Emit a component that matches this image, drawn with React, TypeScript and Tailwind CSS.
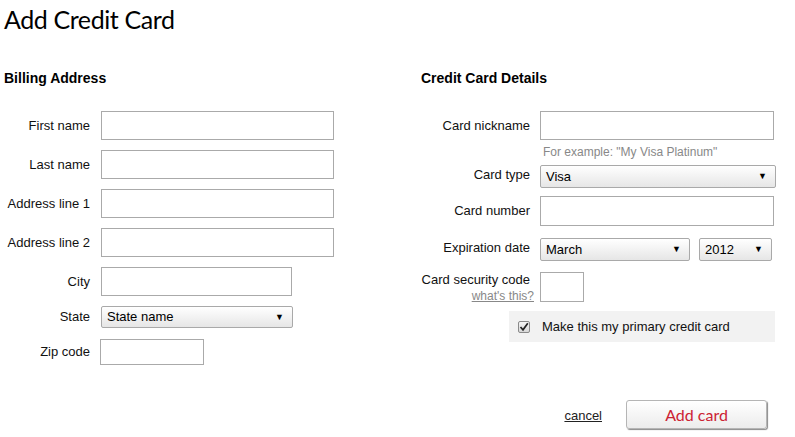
import React from 'react';

const sans = { fontFamily: '"Liberation Sans", Arial, sans-serif' };
const display = { fontFamily: 'Lato, "Open Sans", sans-serif' };

interface FieldProps {
  label: string;
  labelWidth: string;
  children: React.ReactNode;
}

const TextBox = ({ className }: { className: string }) => (
  <div className={`border border-[#aaaaaa] bg-white ${className}`}></div>
);

const SelectBox = ({ value, className }: { value: string; className: string }) => (
  <div
    className={`flex items-center justify-between rounded-[2px] border border-[#a9a9a9] bg-gradient-to-b from-white to-[#e6e6e6] pl-[5px] pr-[8px] text-[13px] text-black ${className}`}
  >
    <span>{value}</span>
    <span className="text-[9px] leading-none">▼</span>
  </div>
);

const LeftRow: React.FC<FieldProps> = ({ label, labelWidth, children }) => (
  <div className="flex items-center">
    <div className={`${labelWidth} shrink-0 text-right text-[13px] text-[#111]`}>{label}</div>
    {children}
  </div>
);

const App: React.FC = () => {
  return (
    <div className="h-[437px] w-[795px] overflow-hidden bg-white px-[4px]" style={sans}>
      <h1 className="pt-[3px] text-[25px] leading-[32px] font-normal tracking-[-0.4px] text-black" style={display}>
        Add Credit Card
      </h1>

      <div className="mt-[35px] flex">
        {/* billing address */}
        <div className="w-[417px] shrink-0">
          <h2 className="text-[14px] leading-[16px] font-bold text-black">Billing Address</h2>
          <div className="mt-[25px] flex flex-col gap-[10px]">
            <LeftRow label="First name" labelWidth="w-[86px]">
              <TextBox className="ml-[11px] h-[29px] w-[233px]" />
            </LeftRow>
            <LeftRow label="Last name" labelWidth="w-[86px]">
              <TextBox className="ml-[11px] h-[29px] w-[233px]" />
            </LeftRow>
            <LeftRow label="Address line 1" labelWidth="w-[86px]">
              <TextBox className="ml-[11px] h-[29px] w-[233px]" />
            </LeftRow>
            <LeftRow label="Address line 2" labelWidth="w-[86px]">
              <TextBox className="ml-[11px] h-[29px] w-[233px]" />
            </LeftRow>
            <LeftRow label="City" labelWidth="w-[86px]">
              <TextBox className="ml-[11px] h-[29px] w-[191px]" />
            </LeftRow>
            <div className="flex items-start">
              <div className="w-[86px] shrink-0 pt-[1px] text-right text-[13px] text-[#111]">State</div>
              <SelectBox value="State name" className="ml-[11px] h-[22px] w-[192px]" />
            </div>
            <div className="mt-[1px] flex items-center">
              <div className="w-[86px] shrink-0 pb-[1px] text-right text-[13px] text-[#111]">Zip code</div>
              <TextBox className="ml-[10px] h-[26px] w-[104px]" />
            </div>
          </div>
        </div>

        {/* credit card details */}
        <div className="w-[366px] shrink-0">
          <h2 className="text-[14px] leading-[16px] font-bold text-black">Credit Card Details</h2>
          <div className="mt-[25px] flex flex-col">
            <LeftRow label="Card nickname" labelWidth="w-[109px]">
              <TextBox className="ml-[10px] h-[29px] w-[234px]" />
            </LeftRow>
            <div className="mt-[5px] pl-[122px] text-[12px] leading-[14px] text-[#888888]">
              For example: &quot;My Visa Platinum&quot;
            </div>
            <div className="mt-[6px] flex items-start">
              <div className="w-[109px] shrink-0 text-right text-[13px] text-[#111]">Card type</div>
              <SelectBox value="Visa" className="ml-[10px] h-[23px] w-[236px]" />
            </div>
            <div className="mt-[8px] flex items-center">
              <div className="w-[109px] shrink-0 text-right text-[13px] text-[#111]">Card number</div>
              <TextBox className="ml-[10px] h-[30px] w-[234px]" />
            </div>
            <div className="mt-[12px] flex items-start">
              <div className="w-[109px] shrink-0 text-right text-[13px] text-[#111]">Expiration date</div>
              <SelectBox value="March" className="ml-[10px] h-[23px] w-[150px]" />
              <SelectBox value="2012" className="ml-[9px] h-[23px] w-[73px]" />
            </div>
            <div className="mt-[11px] flex items-start">
              <div className="w-[109px] shrink-0 text-right leading-[15px]">
                <div className="text-[13px] text-[#111]">Card security code</div>
                <a href="#" className="mr-[-4px] text-[12px] text-[#888888] underline">
                  what&apos;s this?
                </a>
              </div>
              <TextBox className="ml-[10px] h-[30px] w-[44px]" />
            </div>
            <div className="mt-[7px] ml-[88px] flex h-[31px] w-[266px] items-center bg-[#f2f2f2] pl-[9px]">
              <span className="flex h-[12px] w-[12px] items-center justify-center rounded-[2px] border border-[#8a8a8a] bg-gradient-to-b from-[#f4f4f4] to-[#d8d8d8]">
                <svg width="10" height="10" viewBox="0 0 10 10">
                  <path d="M1.5 5 L4 7.8 L8.8 1.2" fill="none" stroke="#222" strokeWidth="1.7" />
                </svg>
              </span>
              <span className="ml-[12px] text-[13px] text-[#111]">Make this my primary credit card</span>
            </div>
          </div>
        </div>
      </div>

      <div className="mt-[35px] flex items-center justify-end pr-[24px]">
        <a href="#" className="mt-[3px] text-[13px] text-[#222] underline">
          cancel
        </a>
        <button
          className="ml-[24px] h-[29px] w-[141px] rounded-[3px] border border-[#b5b5b5] bg-gradient-to-b from-white to-[#ececec] text-[16px] text-[#cc2233] shadow-[1px_1px_1px_#8a8a8a]"
          style={display}
        >
          Add card
        </button>
      </div>
    </div>
  );
};

export default App;
